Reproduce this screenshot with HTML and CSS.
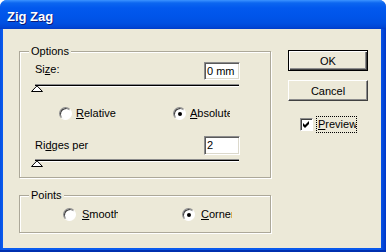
FILE: index.html
```html
<!DOCTYPE html>
<html lang="en">
<head>
  <meta charset="UTF-8" />
  <title>Zig Zag</title>
  <link rel="stylesheet" href="styles.css">
</head>
<body>

  <div class="window">
    <div class="titlebar">
      <span class="title">Zig Zag</span>
    </div>

    <div class="client">
      <div class="left">
        <fieldset class="group options">
          <legend>Options</legend>
          <div class="group-body">
            <div class="field-row">
              <label class="lbl size-lbl">Si<u>z</u>e:</label>
              <div class="textbox">0 mm</div>
            </div>
            <div class="slider">
              <div class="track"></div>
              <svg class="thumb" width="12" height="7" viewBox="0 0 12 7">
                <polygon points="0.5,6.5 6,0.8 11.5,6.5" fill="#fff" stroke="#000" stroke-width="1"/>
              </svg>
            </div>
            <div class="radio-row opt-radios">
              <span class="radio first"><span class="dot-box"></span><span class="rlabel"><u>R</u>elative</span></span>
              <span class="radio"><span class="dot-box checked"></span><span class="rlabel clip-abs"><u>A</u>bsolute</span></span>
            </div>
            <div class="field-row ridges">
              <label class="lbl ridges-lbl">Ri<u>d</u>ges per</label>
              <div class="textbox">2</div>
            </div>
            <div class="slider second">
              <div class="track"></div>
              <svg class="thumb" width="12" height="7" viewBox="0 0 12 7">
                <polygon points="0.5,6.5 6,0.8 11.5,6.5" fill="#fff" stroke="#000" stroke-width="1"/>
              </svg>
            </div>
          </div>
        </fieldset>

        <fieldset class="group points">
          <legend>Points</legend>
          <div class="group-body">
            <div class="radio-row pt-radios">
              <span class="radio first"><span class="dot-box"></span><span class="rlabel clip-smooth"><u>S</u>mooth</span></span>
              <span class="radio"><span class="dot-box checked"></span><span class="rlabel clip-corner"><u>C</u>orner</span></span>
            </div>
          </div>
        </fieldset>
      </div>

      <div class="right">
        <button class="btn default">OK</button>
        <button class="btn">Cancel</button>
        <div class="check-row">
          <span class="checkbox">
            <svg width="7" height="7" viewBox="0 0 7 7">
              <path d="M0 2 L2 4 L6 0 L6 3 L2 7 L0 5 Z" fill="#000"/>
            </svg>
          </span>
          <span class="check-label"><u>P</u>review</span>
        </div>
      </div>
    </div>
  </div>

</body>
</html>
```

FILE: styles.css
```css
body {
  margin: 0;
  font-family: "Liberation Sans", Arial, sans-serif;
  font-size: 11px;
  line-height: 13px;
  color: #000;
  background: #fff;
}
.window {
  width: 386px;
  height: 252px;
  display: flex;
  flex-direction: column;
  border-radius: 7px 7px 0 0;
  background: linear-gradient(to right, #0850E0 0, #0a5cf0 3px, #0858ec 380px, #0038c8 386px);
  box-shadow: inset 0 -2px 0 #0030b0;
  overflow: hidden;
}
.titlebar {
  height: 29px;
  box-sizing: border-box;
  padding: 9px 0 0 7px;
  background: linear-gradient(to bottom, #3d95ff 0, #2a83fb 1px, #0c66f0 3px, #0259ee 8px, #0055ea 16px, #0050e2 23px, #0046d6 27px, #003cc8 29px);
}
.title {
  color: #fff;
  font-weight: bold;
  font-size: 13px;
  line-height: 15px;
  text-shadow: 1px 1px 0 #0a1a7a;
}
.client {
  flex: 1;
  margin: 0 5px 4px 3px;
  background: #ECE9D8;
  display: flex;
  padding: 16px 0 0 16px;
}

/* group boxes */
.left {
  width: 252px;
}
.group {
  margin: 0;
  padding: 0 0 10px;
  min-width: 0;
  border: 1px solid #aca899;
  box-shadow: inset 1px 1px 0 #fff, 1px 1px 0 #fff;
}
.group legend {
  margin-left: 9px;
  padding: 0 2px;
  line-height: 13px;
  background: #ECE9D8;
}
.group-body {
  padding: 0 30px 0 15px;
}
.points {
  margin-top: 11px;
  padding-bottom: 11px;
}

.field-row {
  display: flex;
  justify-content: space-between;
  align-items: flex-start;
  margin-top: 4px;
}
.size-lbl {
  margin-top: 1px;
}
.ridges {
  margin-top: 16px;
}
.ridges-lbl {
  margin-top: 3px;
}
.textbox {
  width: 36px;
  height: 18px;
  box-sizing: border-box;
  padding: 2px 0 0 2px;
  background: #fff;
  border: 1px solid;
  border-color: #8c8c8c #fff #fff #8c8c8c;
  box-shadow: inset 1px 1px 0 #5a5a5a, inset -1px -1px 0 #dcd9cc;
  white-space: nowrap;
  overflow: hidden;
}
.ridges .textbox {
  height: 19px;
}

.slider {
  margin-top: 4px;
}
.track {
  width: 204px;
  height: 1px;
  border-top: 1px solid #8c8c8c;
  border-bottom: 1px solid #fff;
  background: #000;
}
.thumb {
  display: block;
  margin: -2px 0 0 -4px;
}

/* radios */
.radio-row {
  display: flex;
}
.opt-radios {
  margin-top: 15px;
  padding-left: 24px;
}
.pt-radios {
  margin-top: 6px;
  padding-left: 28px;
}
.radio {
  display: flex;
  align-items: center;
  gap: 4px;
}
.opt-radios .first {
  width: 114px;
}
.pt-radios .first {
  width: 119px;
}
.pt-radios .rlabel {
  margin-left: 2px;
}
.dot-box {
  width: 13px;
  height: 13px;
  box-sizing: border-box;
  border-radius: 50%;
  background: #fff;
  border: 1px solid;
  border-color: #8c8c8c #fff #fff #8c8c8c;
  box-shadow: inset 1px 1px 0 #404040;
  display: flex;
  align-items: center;
  justify-content: center;
}
.dot-box.checked::after {
  content: "";
  width: 4px;
  height: 4px;
  border-radius: 50%;
  background: #000;
}
.rlabel {
  white-space: nowrap;
  overflow: hidden;
}
.clip-abs {
  width: 40px;
}
.clip-smooth {
  width: 36px;
}
.clip-corner {
  width: 31px;
}

/* buttons */
.right {
  margin-left: 17px;
  padding-top: 5px;
  display: flex;
  flex-direction: column;
  align-items: flex-start;
}
.btn {
  width: 80px;
  height: 21px;
  padding: 0;
  font-family: inherit;
  font-size: 11px;
  color: #000;
  background: #ECE9D8;
  border: 1px solid;
  border-color: #fff #404040 #404040 #fff;
  box-shadow: inset -1px -1px 0 #8c8c8c;
  border-radius: 0;
}
.btn.default {
  border-color: #000;
  box-shadow: inset 1px 1px 0 #fff, inset -1px -1px 0 #404040, inset -2px -2px 0 #8c8c8c;
}
.btn + .btn {
  margin-top: 9px;
}
.check-row {
  display: flex;
  align-items: center;
  margin: 15px 0 0 12px;
}
.checkbox {
  width: 13px;
  height: 13px;
  box-sizing: border-box;
  background: #fff;
  border: 1px solid;
  border-color: #8c8c8c #fff #fff #8c8c8c;
  box-shadow: inset 1px 1px 0 #404040;
  display: flex;
  align-items: center;
  justify-content: center;
}
.check-label {
  margin-left: 3px;
  width: 38px;
  padding: 1px 0 1px 1px;
  border: 1px dotted #000;
  white-space: nowrap;
  overflow: hidden;
}
```
